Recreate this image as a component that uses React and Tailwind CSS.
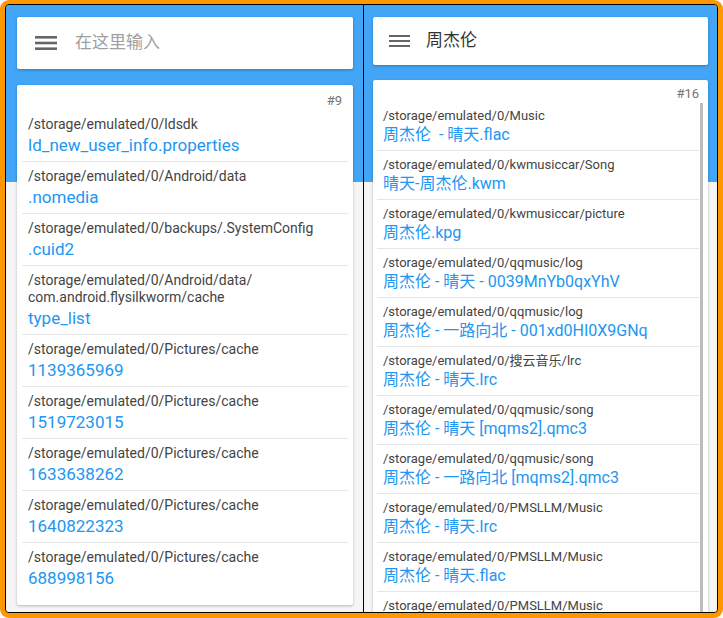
const leftRows = [
  { path: ["/storage/emulated/0/ldsdk"], name: "ld_new_user_info.properties" },
  { path: ["/storage/emulated/0/Android/data"], name: ".nomedia" },
  { path: ["/storage/emulated/0/backups/.SystemConfig"], name: ".cuid2" },
  {
    path: ["/storage/emulated/0/Android/data/", "com.android.flysilkworm/cache"],
    name: "type_list",
  },
  { path: ["/storage/emulated/0/Pictures/cache"], name: "1139365969" },
  { path: ["/storage/emulated/0/Pictures/cache"], name: "1519723015" },
  { path: ["/storage/emulated/0/Pictures/cache"], name: "1633638262" },
  { path: ["/storage/emulated/0/Pictures/cache"], name: "1640822323" },
  { path: ["/storage/emulated/0/Pictures/cache"], name: "688998156" },
];

const rightRows = [
  { path: "/storage/emulated/0/Music", name: "周杰伦  - 晴天.flac" },
  { path: "/storage/emulated/0/kwmusiccar/Song", name: "晴天-周杰伦.kwm" },
  { path: "/storage/emulated/0/kwmusiccar/picture", name: "周杰伦.kpg" },
  { path: "/storage/emulated/0/qqmusic/log", name: "周杰伦 - 晴天 - 0039MnYb0qxYhV" },
  { path: "/storage/emulated/0/qqmusic/log", name: "周杰伦 - 一路向北 - 001xd0HI0X9GNq" },
  { path: "/storage/emulated/0/搜云音乐/lrc", name: "周杰伦 - 晴天.lrc" },
  { path: "/storage/emulated/0/qqmusic/song", name: "周杰伦 - 晴天 [mqms2].qmc3" },
  { path: "/storage/emulated/0/qqmusic/song", name: "周杰伦 - 一路向北 [mqms2].qmc3" },
  { path: "/storage/emulated/0/PMSLLM/Music", name: "周杰伦 - 晴天.lrc" },
  { path: "/storage/emulated/0/PMSLLM/Music", name: "周杰伦 - 晴天.flac" },
  { path: "/storage/emulated/0/PMSLLM/Music", name: "" },
];

function Menu({ w, h, stroke }) {
  return (
    <svg width={w} height={h} viewBox={`0 0 ${w} ${h}`} className="shrink-0">
      <rect x="0" y="0" width={w} height={stroke} fill="#666666" />
      <rect x="0" y={(h - stroke) / 2} width={w} height={stroke} fill="#666666" />
      <rect x="0" y={h - stroke} width={w} height={stroke} fill="#666666" />
    </svg>
  );
}

export default function App() {
  return (
    <div className="w-[723px] h-[618px] bg-white font-[Roboto,'Noto_Sans_CJK_SC',sans-serif]">
      <div className="w-full h-full bg-[#ff9800] rounded-[9px] pt-[4px] px-[5px] pb-[5px]">
        <div className="flex h-full border border-black rounded-[4px] overflow-hidden">
          {/* left phone */}
          <div className="w-[357px] shrink-0 pt-[12px] pl-[11px] pr-[10px] overflow-hidden bg-[linear-gradient(#42a5f5_0_177px,#f5f5f5_177px)]">
            <div className="h-[52px] bg-white rounded-[2px] shadow-[0_1px_3px_rgba(0,0,0,0.25)] flex items-center pl-[18px]">
              <Menu w={22} h={14} stroke={2.6} />
              <span className="ml-[18px] text-[17px] text-[#a0a0a0]">在这里输入</span>
            </div>
            <div className="mt-[16px] bg-white rounded-[2px] shadow-[0_1px_3px_rgba(0,0,0,0.25)] pt-[7px] pb-[11px] px-[5px]">
              <div className="h-[18px] leading-[18px] text-right pr-[6px] text-[13px] text-[#757575]">#9</div>
              {leftRows.map((row, i) => (
                <div
                  key={i}
                  className={`pt-[6px] pb-[4px] px-[6px] ${i < leftRows.length - 1 ? "border-b border-[#e6e6e6]" : ""}`}
                >
                  {row.path.map((line, j) => (
                    <div key={j} className="text-[14px] leading-[17px] text-[#444444] whitespace-nowrap">{line}</div>
                  ))}
                  <div className="text-[17px] leading-[24px] text-[#2196f3] whitespace-nowrap">{row.name}</div>
                </div>
              ))}
            </div>
          </div>

          <div className="w-px shrink-0 bg-black" />

          {/* right phone */}
          <div className="flex-1 pt-[12px] px-[9px] overflow-hidden bg-[linear-gradient(#42a5f5_0_177px,#f5f5f5_177px)]">
            <div className="h-[48px] bg-white rounded-[2px] shadow-[0_1px_3px_rgba(0,0,0,0.25)] flex items-center pl-[16px]">
              <Menu w={21} h={12} stroke={2} />
              <span className="ml-[16px] text-[17px] text-[#333333]">周杰伦</span>
            </div>
            <div className="relative mt-[15px] h-[560px] bg-white rounded-[2px] shadow-[0_1px_3px_rgba(0,0,0,0.25)] pt-[5px] pl-[4px] pr-[9px]">
              <div className="h-[17px] leading-[17px] text-right text-[13px] text-[#757575]">#16</div>
              {rightRows.map((row, i) => (
                <div key={i} className="pt-[6px] pb-[4px] px-[6px] border-b border-[#e6e6e6]">
                  <div className="text-[13px] leading-[16px] text-[#444444] whitespace-nowrap">{row.path}</div>
                  {row.name && (
                    <div className="text-[16px] leading-[22px] text-[#2196f3] whitespace-pre">{row.name}</div>
                  )}
                </div>
              ))}
              <div className="absolute right-[5px] top-[23px] bottom-0 w-[3px] bg-[#bdbdbd]" />
            </div>
          </div>
        </div>
      </div>
    </div>
  );
}
